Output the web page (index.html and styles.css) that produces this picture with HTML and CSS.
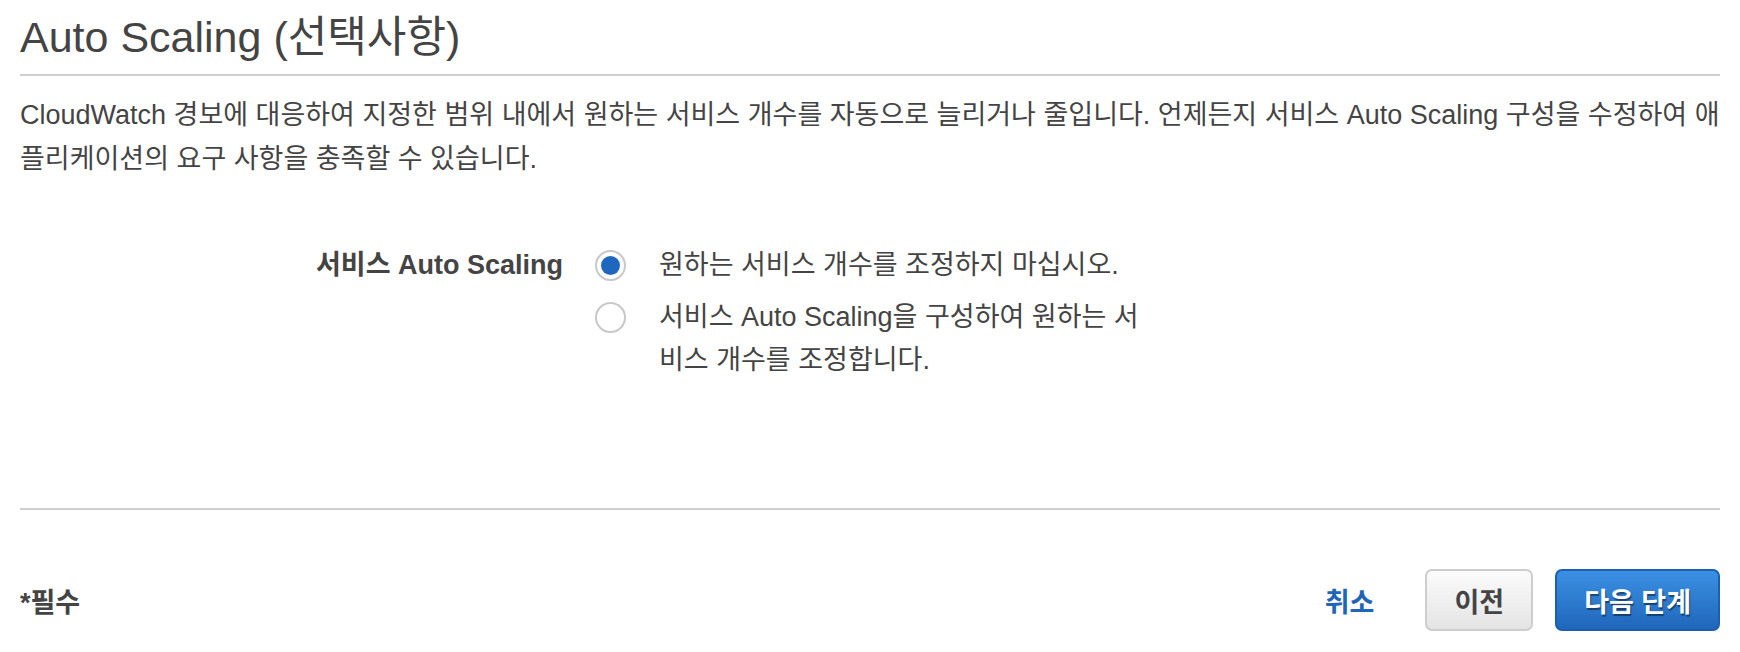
FILE: index.html
```html
<!DOCTYPE html>
<html lang="ko">
<head>
<meta charset="utf-8">
<title>Auto Scaling</title>
<link rel="stylesheet" href="styles.css">
</head>
<body>
<div class="page">
  <h1 class="title">Auto Scaling (선택사항)</h1>
  <p class="desc">CloudWatch 경보에 대응하여 지정한 범위 내에서 원하는 서비스 개수를 자동으로 늘리거나 줄입니다. 언제든지 서비스 Auto Scaling 구성을 수정하여 애플리케이션의 요구 사항을 충족할 수 있습니다.</p>
  <div class="form-row">
    <div class="label">서비스 Auto Scaling</div>
    <div class="options">
      <label class="option">
        <span class="radio checked"></span>
        <span class="opt-text">원하는 서비스 개수를 조정하지 마십시오.</span>
      </label>
      <label class="option">
        <span class="radio"></span>
        <span class="opt-text">서비스 Auto Scaling을 구성하여 원하는 서비스 개수를 조정합니다.</span>
      </label>
    </div>
  </div>
  <div class="footer">
    <div class="required">*필수</div>
    <div class="actions">
      <a class="cancel">취소</a>
      <button class="btn">이전</button>
      <button class="btn primary">다음 단계</button>
    </div>
  </div>
</div>
</body>
</html>
```

FILE: styles.css
```css
html, body {
  margin: 0;
  padding: 0;
  background: #ffffff;
}
body {
  font-family: "Liberation Sans", "Noto Sans CJK KR", sans-serif;
  color: #444444;
  font-size: 27px;
}
.page {
  padding: 0 20px 20px 20px;
}
.title {
  margin: 0;
  padding: 12px 0 12px 0;
  font-size: 43px;
  line-height: 50px;
  font-weight: normal;
  color: #444444;
  border-bottom: 2px solid #cfcfcf;
}
.desc {
  margin: 17px 0 0 0;
  font-size: 27px;
  line-height: 44px;
}
.form-row {
  display: grid;
  grid-template-columns: 543px 1fr;
  column-gap: 32px;
  margin-top: 63px;
}
.label {
  text-align: right;
  font-weight: bold;
  line-height: 43px;
}
.options {
  display: flex;
  flex-direction: column;
  gap: 9px;
}
.option {
  display: flex;
  align-items: flex-start;
  gap: 33px;
}
.radio {
  flex: none;
  width: 27px;
  height: 27px;
  margin-top: 6px;
  border: 2px solid #c8c8c8;
  border-radius: 50%;
  background: #ffffff;
  display: flex;
  align-items: center;
  justify-content: center;
}
.radio.checked::after {
  content: "";
  width: 19px;
  height: 19px;
  border-radius: 50%;
  background: #1f66bf;
}
.opt-text {
  width: 490px;
  line-height: 43px;
}
.footer {
  margin-top: 126px;
  border-top: 2px solid #cfcfcf;
  padding-top: 59px;
  display: flex;
  justify-content: space-between;
  align-items: center;
}
.required {
  font-weight: bold;
}
.actions {
  display: flex;
  align-items: center;
}
.cancel {
  color: #1f65b8;
  font-weight: bold;
  margin-right: 51px;
  cursor: pointer;
}
.btn {
  font-family: "Liberation Sans", "Noto Sans CJK KR", sans-serif;
  font-size: 27px;
  font-weight: bold;
  height: 62px;
  padding: 0 27px;
  border-radius: 7px;
  border: 2px solid #cdcdcd;
  background: linear-gradient(#fbfbfb, #e4e4e4);
  color: #444444;
  cursor: pointer;
}
.btn + .btn {
  margin-left: 22px;
}
.btn.primary {
  border: 2px solid #1c5fae;
  background: linear-gradient(#3b90e3, #1f67bb);
  color: #ffffff;
  text-shadow: 1px 2px 1px rgba(0, 0, 0, 0.45);
}
```
